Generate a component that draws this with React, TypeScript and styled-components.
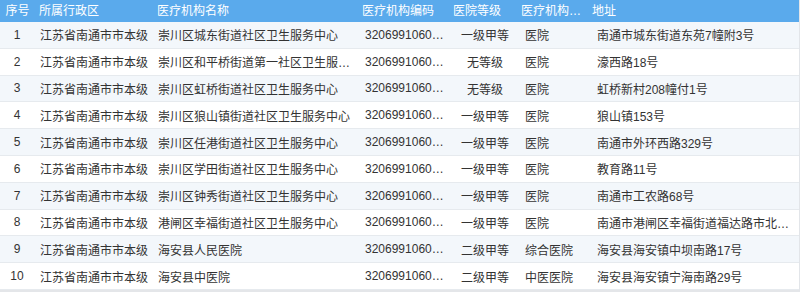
import React from "react";
import styled, { createGlobalStyle } from "styled-components";

const GlobalStyle = createGlobalStyle`
  html, body { margin: 0; padding: 0; background: #ffffff; }
  body { font-family: "Liberation Sans", "Noto Sans CJK SC", sans-serif; font-size: 12px; color: #333; }
`;

const COLS = "35px 118px 205px 91px 68px 71px 1fr";

const Table = styled.div`
  width: 800px;
  height: 292px;
  box-sizing: border-box;
  border-right: 1px solid #e2e5e9;
  border-bottom: 2px solid #e4e6e9;
  overflow: hidden;
`;

const HeaderRow = styled.div`
  display: grid;
  grid-template-columns: ${COLS};
  height: 22px;
  background: #5aaaec;
  color: #ffffff;
`;

const HeadCell = styled.div<{ $center?: boolean }>`
  padding: 0 4px;
  line-height: 22px;
  white-space: nowrap;
  overflow: hidden;
  text-overflow: ellipsis;
  text-align: ${(p) => (p.$center ? "center" : "left")};
`;

const Row = styled.div<{ $odd: boolean }>`
  display: grid;
  grid-template-columns: ${COLS};
  height: 26.8px;
  box-sizing: border-box;
  border-bottom: 1px solid #e6eaee;
  background: ${(p) => (p.$odd ? "#f3f7fb" : "#ffffff")};
  align-items: center;
`;

const Cell = styled.div<{ $pl?: number; $align?: "left" | "center" }>`
  padding: 0 5px 0 ${(p) => p.$pl ?? 5}px;
  white-space: nowrap;
  overflow: hidden;
  text-overflow: ellipsis;
  text-align: ${(p) => p.$align ?? "left"};
  color: #333;
`;

const rows = [
  ["江苏省南通市市本级", "崇川区城东街道社区卫生服务中心", "320699106012345", "一级甲等", "医院", "南通市城东街道东苑7幢附3号"],
  ["江苏省南通市市本级", "崇川区和平桥街道第一社区卫生服务中心", "320699106012346", "无等级", "医院", "濠西路18号"],
  ["江苏省南通市市本级", "崇川区虹桥街道社区卫生服务中心", "320699106012347", "无等级", "医院", "虹桥新村208幢付1号"],
  ["江苏省南通市市本级", "崇川区狼山镇街道社区卫生服务中心", "320699106012348", "一级甲等", "医院", "狼山镇153号"],
  ["江苏省南通市市本级", "崇川区任港街道社区卫生服务中心", "320699106012349", "一级甲等", "医院", "南通市外环西路329号"],
  ["江苏省南通市市本级", "崇川区学田街道社区卫生服务中心", "320699106012350", "一级甲等", "医院", "教育路11号"],
  ["江苏省南通市市本级", "崇川区钟秀街道社区卫生服务中心", "320699106012351", "一级甲等", "医院", "南通市工农路68号"],
  ["江苏省南通市市本级", "港闸区幸福街道社区卫生服务中心", "320699106012352", "一级甲等", "医院", "南通市港闸区幸福街道福达路市北小区旁"],
  ["江苏省南通市市本级", "海安县人民医院", "320699106012353", "二级甲等", "综合医院", "海安县海安镇中坝南路17号"],
  ["江苏省南通市市本级", "海安县中医院", "320699106012354", "二级甲等", "中医医院", "海安县海安镇宁海南路29号"],
];

export default function App() {
  return (
    <>
      <GlobalStyle />
      <Table>
        <HeaderRow>
          <HeadCell $center>序号</HeadCell>
          <HeadCell>所属行政区</HeadCell>
          <HeadCell>医疗机构名称</HeadCell>
          <HeadCell>医疗机构编码</HeadCell>
          <HeadCell>医院等级</HeadCell>
          <HeadCell>医疗机构类型</HeadCell>
          <HeadCell>地址</HeadCell>
        </HeaderRow>
        {rows.map((r, i) => (
          <Row key={i} $odd={i % 2 === 0}>
            <Cell $pl={4} $align="center">{i + 1}</Cell>
            <Cell $pl={5}>{r[0]}</Cell>
            <Cell $pl={5}>{r[1]}</Cell>
            <Cell $pl={7}>{r[2]}</Cell>
            <Cell $pl={9} $align="center">{r[3]}</Cell>
            <Cell $pl={8}>{r[4]}</Cell>
            <Cell $pl={9}>{r[5]}</Cell>
          </Row>
        ))}
      </Table>
    </>
  );
}
